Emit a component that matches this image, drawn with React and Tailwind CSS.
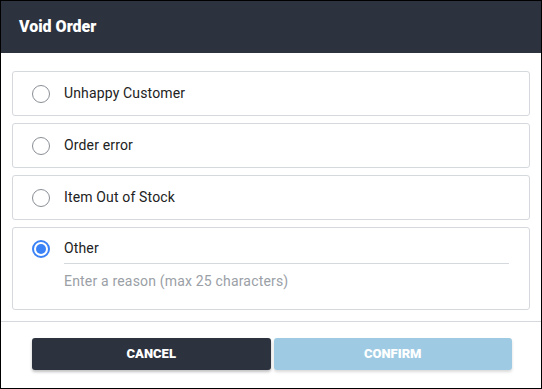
function Radio({ checked }) {
  if (checked) {
    return (
      <span className="w-[18px] h-[18px] rounded-full border-2 border-[#3b82f6] flex items-center justify-center shrink-0">
        <span className="w-[10px] h-[10px] rounded-full bg-[#3b82f6]" />
      </span>
    );
  }
  return <span className="w-[18px] h-[18px] rounded-full border border-[#8a8f96] shrink-0" />;
}

function Option({ label }) {
  return (
    <div className="h-[45px] rounded-[3px] border border-[#d5d9de] flex items-center pl-[19px] gap-[14px]">
      <Radio />
      <span className="text-[14px] tracking-[0.15px] text-[#222]">{label}</span>
    </div>
  );
}

export default function App() {
  const options = ["Unhappy Customer", "Order error", "Item Out of Stock"];
  return (
    <div
      className="w-[542px] h-[389px] border border-black bg-white flex flex-col"
      style={{ fontFamily: "Roboto, 'Liberation Sans', sans-serif" }}
    >
      <div className="h-[52px] bg-[#2d333e] flex items-center px-[18px] pb-[1px] shrink-0">
        <h1 className="text-white font-black text-[16px]">Void Order</h1>
      </div>

      <div className="flex flex-col gap-[7px] px-[11px] pt-[18px] pb-[11px]">
        {options.map((o) => (
          <Option key={o} label={o} />
        ))}
        <div className="h-[83px] rounded-[3px] border border-[#d5d9de] pl-[19px] pr-[20px] pt-[10px] flex gap-[14px]">
          <div className="pt-[2px]">
            <Radio checked />
          </div>
          <div className="flex-1">
            <div className="text-[14px] tracking-[0.15px] text-[#222] pb-[4px] border-b border-[#d5d9de]">Other</div>
            <div className="text-[14px] tracking-[0.18px] text-[#9aa0a6] pt-[7px]">Enter a reason (max 25 characters)</div>
          </div>
        </div>
      </div>

      <div className="border-t border-[#d5d9de] flex gap-[3px] pl-[31px] pr-[29px] pt-[16px]">
        <button className="flex-1 h-[32px] rounded-[3px] bg-[#2d333e] text-white text-[13px] font-black shadow-[0_2px_3px_rgba(0,0,0,0.25)]">
          CANCEL
        </button>
        <button className="flex-1 h-[32px] rounded-[3px] bg-[#9ecbe3] text-white text-[13px] font-black shadow-[0_2px_3px_rgba(0,0,0,0.15)]">
          CONFIRM
        </button>
      </div>
    </div>
  );
}
